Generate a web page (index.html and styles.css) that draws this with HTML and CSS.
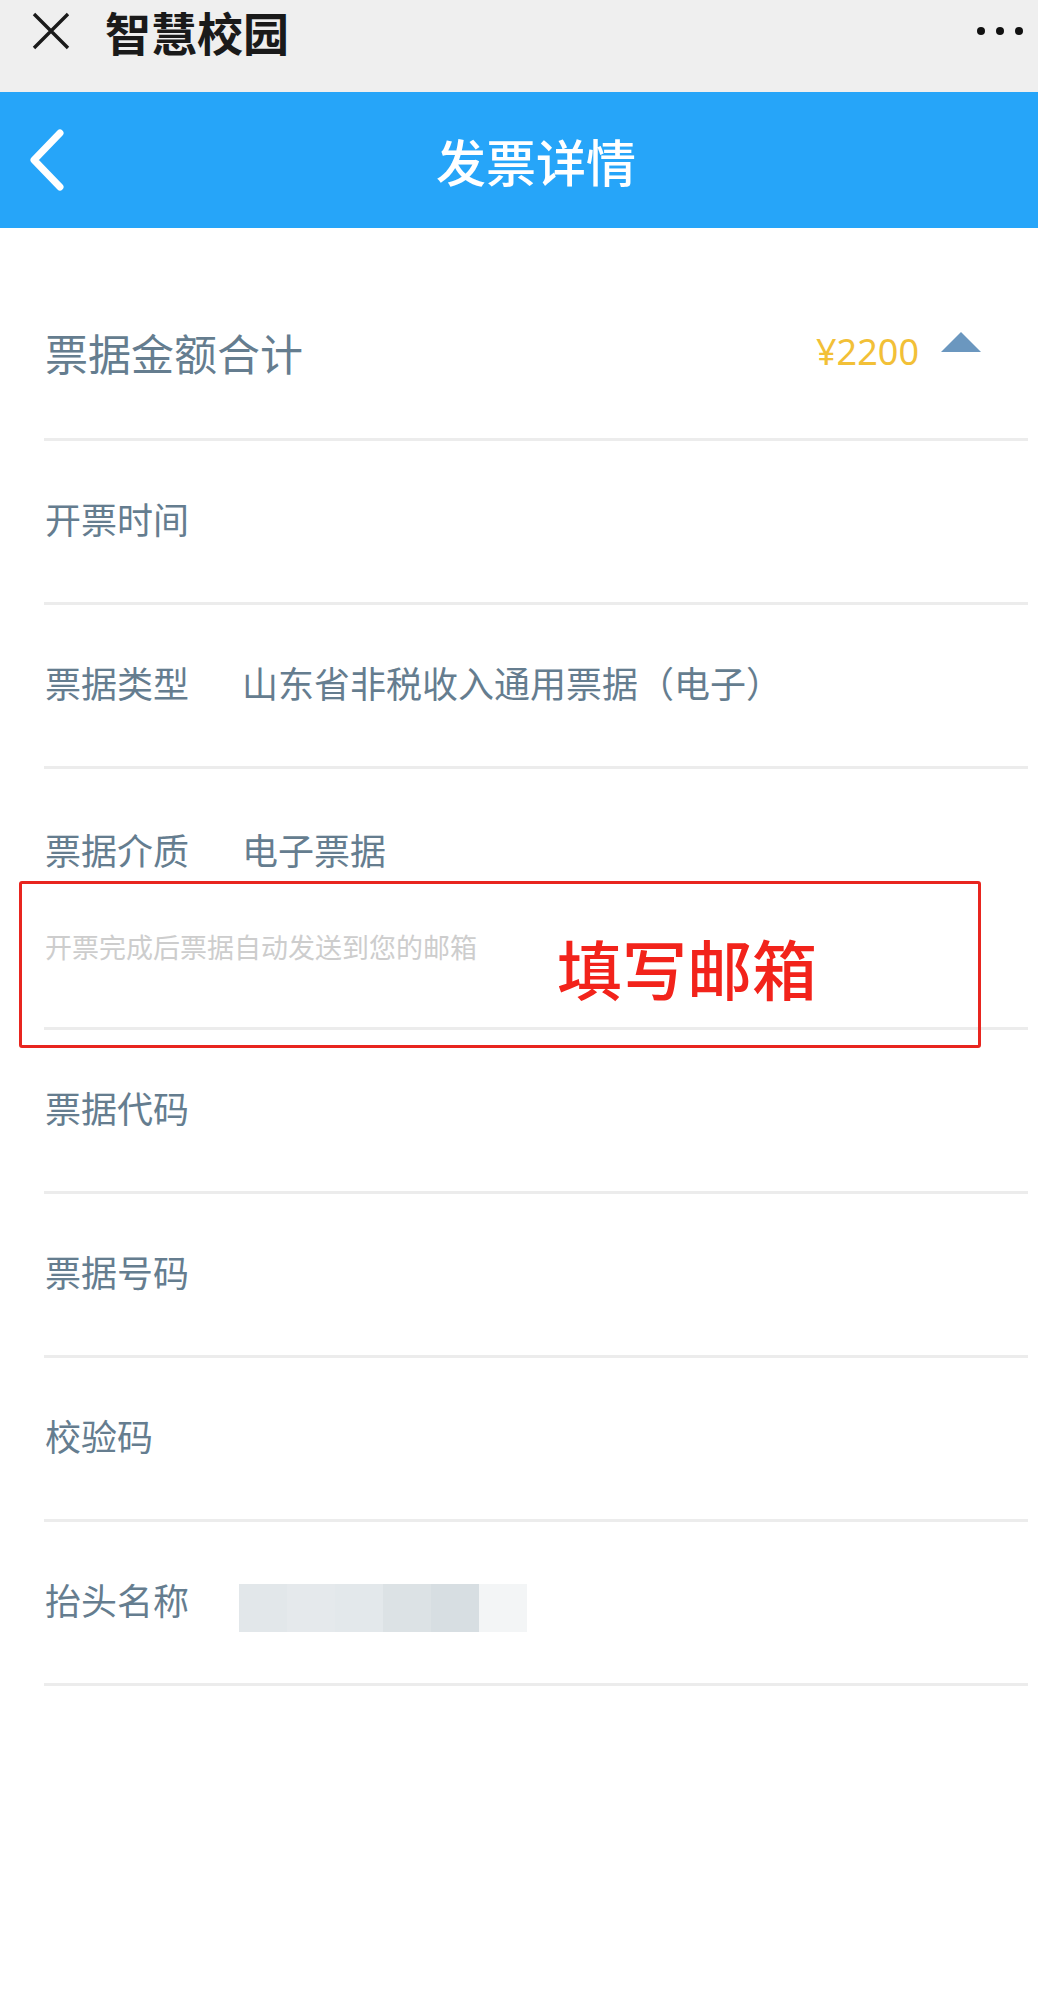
FILE: index.html
```html
<!DOCTYPE html>
<html lang="zh">
<head>
  <meta charset="UTF-8">
  <title>发票详情</title>
  <link rel="stylesheet" href="styles.css">
</head>
<body>
  <div class="wx-bar">
    <div class="wx-inner">
      <svg class="wx-close" width="38" height="38" viewBox="0 0 38 38">
        <path d="M2 2 L36 36 M36 2 L2 36" stroke="#1a1a1a" stroke-width="3.4" fill="none" />
      </svg>
      <div class="wx-title">智慧校园</div>
      <div class="wx-more"><i></i><i></i><i></i></div>
    </div>
  </div>

  <header class="nav">
    <svg class="nav-back" width="40" height="66" viewBox="0 0 40 66">
      <path d="M34 6 L8 33 L34 60" stroke="#fff" stroke-width="7" fill="none" stroke-linecap="round" stroke-linejoin="round" />
    </svg>
    <h1 class="nav-title">发票详情</h1>
  </header>

  <main class="detail">
    <div class="row row-total">
      <span class="label">票据金额合计</span>
      <span class="amount">¥2200</span>
      <span class="arrow-up"></span>
    </div>

    <div class="row">
      <span class="label">开票时间</span>
    </div>

    <div class="row">
      <span class="label">票据类型</span>
      <span class="value">山东省非税收入通用票据（电子）</span>
    </div>

    <div class="row row-medium">
      <div class="medium-line">
        <span class="label">票据介质</span>
        <span class="value">电子票据</span>
      </div>
      <div class="hint">开票完成后票据自动发送到您的邮箱</div>
      <!-- annotation drawn on top of the screenshot -->
      <div class="mark-box">
        <span class="mark-text">填写邮箱</span>
      </div>
    </div>

    <div class="row">
      <span class="label">票据代码</span>
    </div>

    <div class="row">
      <span class="label">票据号码</span>
    </div>

    <div class="row">
      <span class="label">校验码</span>
    </div>

    <div class="row">
      <span class="label">抬头名称</span>
      <span class="blurred"></span>
    </div>
  </main>
</body>
</html>
```

FILE: styles.css
```css
body {
  margin: 0;
  padding: 0;
  background: #fff;
  font-family: "Noto Sans CJK SC", "Noto Sans", sans-serif;
}

/* wechat top bar */
.wx-bar {
  height: 92px;
  background-color: #efefef;
}

.wx-inner {
  display: flex;
  align-items: center;
  height: 58px;
  padding: 2px 15px 0 32px;
}

.wx-close {
  display: block;
}

.wx-title {
  margin-left: 35px;
  font-size: 46px;
  font-weight: 700;
  color: #1a1a1a;
  line-height: 58px;
  flex: 1;
}

.wx-more {
  display: flex;
  gap: 11px;
}

.wx-more i {
  width: 8px;
  height: 8px;
  border-radius: 50%;
  background-color: #111;
}

/* blue nav */
.nav {
  display: flex;
  align-items: center;
  height: 136px;
  padding: 0 32px 0 26px;
  background-color: #26a5f9;
}

.nav-back {
  display: block;
}

.nav-title {
  flex: 1;
  margin: 0;
  text-align: center;
  font-size: 50px;
  font-weight: 500;
  color: #fff;
}

/* detail list */
.detail {
  margin: 0 10px 0 44px;
  padding-top: 40px;
}

.row {
  display: flex;
  align-items: center;
  height: 164px;
  box-sizing: border-box;
  border-bottom: 3px solid #ececec;
  padding: 0 0 8px 1px;
  color: #657d8f;
  font-size: 36px;
  line-height: 50px;
}

.row .label {
  white-space: nowrap;
}

.row .value {
  margin-left: 53px;
}

.row-total {
  height: 173px;
  padding-bottom: 2px;
}

.row-total .label {
  flex: 1;
  font-size: 43px;
}

.amount {
  font-family: "Noto Sans", sans-serif;
  font-size: 36px;
  color: #f2c037;
}

.arrow-up {
  width: 0;
  height: 0;
  margin: 0 47px 20px 22px;
  border-left: 20px solid transparent;
  border-right: 20px solid transparent;
  border-bottom: 20px solid #6b97bf;
}

.row-medium {
  display: block;
  position: relative;
  height: 261px;
  padding-top: 55px;
}

.medium-line {
  display: flex;
}

.hint {
  margin-top: 55px;
  font-size: 27px;
  line-height: 36px;
  color: #cdcdcd;
}

.mark-box {
  position: absolute;
  top: 112px;
  left: -25px;
  width: 962px;
  height: 167px;
  box-sizing: border-box;
  border: 3px solid #e8251f;
  border-radius: 3px;
  display: flex;
  align-items: center;
  padding: 4px 0 0 535px;
}

.mark-text {
  font-size: 65px;
  line-height: 80px;
  color: #f2231b;
  font-weight: 500;
}

.blurred {
  width: 288px;
  height: 48px;
  margin: 18px 0 0 50px;
  background: linear-gradient(90deg,
    #e2e7ea 0 48px, #e5e9ec 48px 96px, #e3e8eb 96px 144px,
    #dce2e5 144px 192px, #d7dee2 192px 240px, #f3f5f6 240px 288px);
}
```
